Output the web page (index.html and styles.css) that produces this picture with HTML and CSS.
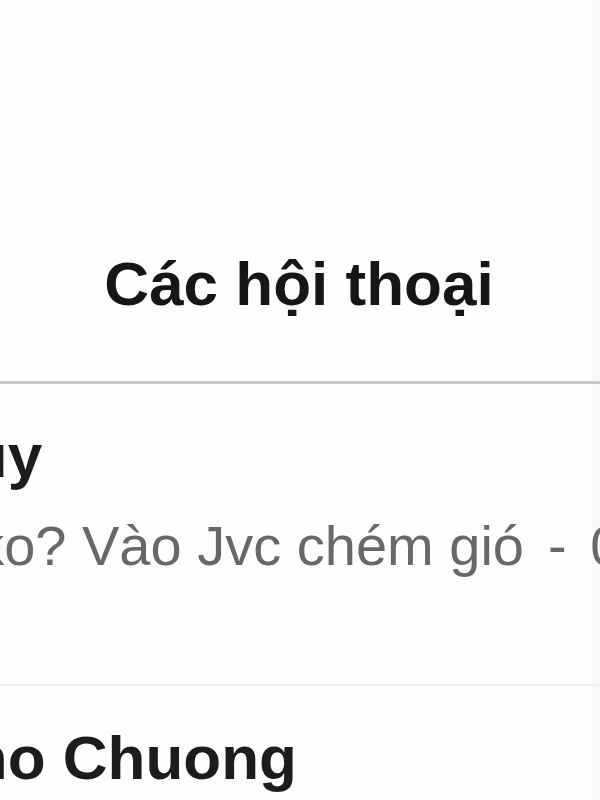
FILE: index.html
```html
<!DOCTYPE html>
<html lang="vi">
<head>
<meta charset="utf-8">
<title>Các hội thoại</title>
<link rel="stylesheet" href="styles.css">
</head>
<body>
<main class="screen">
  <header class="header">
    <h1 class="title">Các hội thoại</h1>
  </header>
  <ul class="list">
    <li class="row">
      <div class="row-body">
        <div class="name">Huy</div>
        <div class="message"><span class="snippet">ai ko? Vào Jvc chém gió</span><span class="time">- 09:41</span></div>
      </div>
    </li>
    <li class="row">
      <div class="row-body">
        <div class="name">Nho Chuong</div>
        <div class="message"><span class="snippet">Ok</span></div>
      </div>
    </li>
  </ul>
</main>
</body>
</html>
```

FILE: styles.css
```css
html, body {
  margin: 0;
  padding: 0;
  background: #fefefe;
  overflow: hidden;
}

.screen {
  width: 600px;
  height: 800px;
  overflow: hidden;
  font-family: "Liberation Sans", Arial, sans-serif;
  background: linear-gradient(to right, #fefefe 0, #fefefe 592px, #f8f8f8 592px);
}

.header {
  padding: 248px 0 61px;
  border-bottom: 3px solid #c9c9c9;
}

.title {
  margin: 0;
  text-align: center;
  font-size: 62px;
  line-height: 72px;
  font-weight: 700;
  color: #161616;
  padding-right: 2px;
}

.list {
  list-style: none;
  margin: 0;
  padding: 0;
}

.row {
  padding: 36px 0 106px;
  border-bottom: 2px solid #efefef;
}

.row-body {
  margin-left: -75px;
  white-space: nowrap;
}

.name {
  font-size: 62px;
  line-height: 72px;
  font-weight: 700;
  color: #1c1c1c;
}

.message {
  display: flex;
  margin: 22px 0 0 -8px;
  font-size: 56px;
  line-height: 64px;
  color: #686868;
}

.time {
  margin-left: 24px;
  word-spacing: 8px;
}
```
